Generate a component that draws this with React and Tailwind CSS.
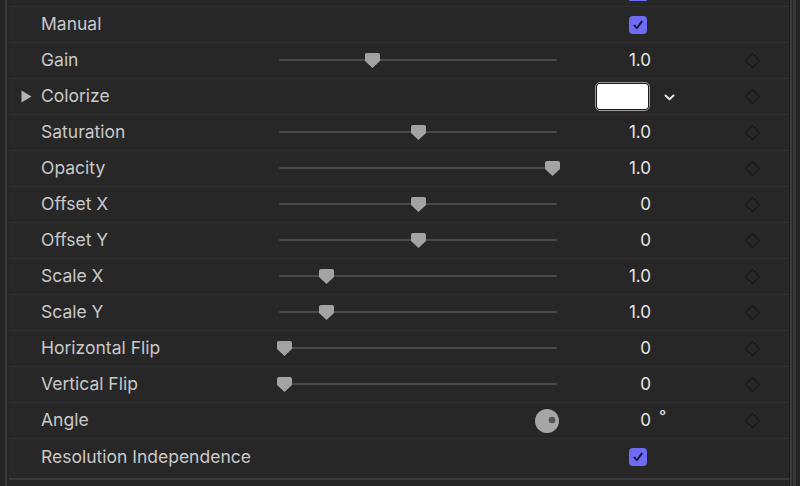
import React from 'react';

const rows = [
  { label: 'Manual', kind: 'check' },
  { label: 'Gain', kind: 'slider', pos: 0.33, value: '1.0' },
  { label: 'Colorize', kind: 'color', disclosure: true },
  { label: 'Saturation', kind: 'slider', pos: 0.5, value: '1.0' },
  { label: 'Opacity', kind: 'slider', pos: 1, value: '1.0' },
  { label: 'Offset X', kind: 'slider', pos: 0.5, value: '0' },
  { label: 'Offset Y', kind: 'slider', pos: 0.5, value: '0' },
  { label: 'Scale X', kind: 'slider', pos: 0.157, value: '1.0' },
  { label: 'Scale Y', kind: 'slider', pos: 0.157, value: '1.0' },
  { label: 'Horizontal Flip', kind: 'slider', pos: 0, value: '0' },
  { label: 'Vertical Flip', kind: 'slider', pos: 0, value: '0' },
  { label: 'Angle', kind: 'angle', value: '0' },
  { label: 'Resolution Independence', kind: 'check', last: true },
];

function Checkbox() {
  return (
    <div className="flex h-[18px] w-[18px] items-center justify-center rounded-[4px] bg-[#6d6cf3]">
      <svg width="12" height="12" viewBox="0 0 12 12" fill="none">
        <path d="M2.3 6.4 L4.9 9.2 L9.7 2.6" stroke="#16163a" strokeWidth="1.9" strokeLinecap="round" strokeLinejoin="round" />
      </svg>
    </div>
  );
}

function Slider({ pos }) {
  return (
    <div className="relative h-[16px] w-full">
      <div className="absolute left-[2px] right-[3px] top-[6px] h-[2px] rounded-full bg-[#4a4a4a]" />
      <svg
        className="absolute top-0"
        style={{ left: `${Math.round(pos * 268)}px` }}
        width="15"
        height="15"
        viewBox="0 0 15 15"
      >
        <path d="M2 0 H13 Q15 0 15 2 V8 L7.5 15 L0 8 V2 Q0 0 2 0 Z" fill="#a3a3a3" />
      </svg>
    </div>
  );
}

function Diamond() {
  return <div className="h-[11px] w-[11px] rotate-45 border border-[#161616]" />;
}

function Row({ row }) {
  return (
    <div
      className={
        'grid h-[36px] grid-cols-[268px_283px_91px_1fr] items-center ' +
        (row.last ? 'mb-[3px]' : 'border-b border-[#303030]')
      }
    >
      <div className="flex items-center pl-[12px] text-[17.5px] text-[#c9c9c9]">
        <div className="flex w-[20px] items-center">
          {row.disclosure && (
            <svg width="11" height="13" viewBox="0 0 11 13">
              <path d="M0.5 0.5 L10.5 6.5 L0.5 12.5 Z" fill="#b3b3b3" />
            </svg>
          )}
        </div>
        <span>{row.label}</span>
      </div>
      <div className="flex items-center justify-end">
        {row.kind === 'slider' && <Slider pos={row.pos} />}
        {row.kind === 'angle' && (
          <svg className="mr-[1px]" width="24" height="24" viewBox="0 0 24 24">
            <circle cx="12" cy="12" r="12" fill="#a6a6a6" />
            <circle cx="17" cy="11" r="3.3" fill="#555555" />
          </svg>
        )}
      </div>
      <div className="flex items-center justify-end text-[17px] text-[#e6e6e6]">
        {row.kind === 'check' && (
          <div className="pr-[4px]">
            <Checkbox />
          </div>
        )}
        {row.kind === 'color' && (
          <div className="mr-[1px] h-[29px] w-[55px] rounded-[5px] border border-[#9a9a9a] bg-[#1a1a1a] p-[1px]">
            <div className="h-full w-full rounded-[3px] bg-white" />
          </div>
        )}
        {(row.kind === 'slider' || row.kind === 'angle') && <span>{row.value}</span>}
      </div>
      <div className="flex items-center">
        <div className="flex w-[96px] items-center">
          {row.kind === 'color' && (
            <svg className="ml-[13px] mt-[2px]" width="11" height="7" viewBox="0 0 11 7">
              <path d="M1.5 1.5 L5.5 5.2 L9.5 1.5" stroke="#e8e8e8" strokeWidth="2" fill="none" strokeLinecap="round" strokeLinejoin="round" />
            </svg>
          )}
          {row.kind === 'angle' && (
            <span className="-mt-[9px] ml-[8px] text-[16px] leading-none text-[#e6e6e6]">°</span>
          )}
        </div>
        {row.kind !== 'check' && <Diamond />}
      </div>
    </div>
  );
}

export default function App() {
  return (
    <div className="flex h-[486px] w-[800px] overflow-hidden bg-[#232323] font-['Inter',sans-serif]">
      <div className="flex w-[9px] shrink-0">
        <div className="w-[5px] bg-[#242424]" />
        <div className="w-[2px] bg-[#393939]" />
        <div className="w-[2px] bg-[#252525]" />
      </div>
      <div className="flex w-[780px] shrink-0 flex-col bg-[#272727]">
        <div className="grid h-[7px] grid-cols-[268px_283px_91px_1fr] border-b border-[#303030]">
          <div />
          <div />
          <div className="flex justify-end pr-[4px]">
            <div className="h-[1px] w-[18px] rounded-b bg-[#6d6cf3]" />
          </div>
        </div>
        {rows.map((row) => (
          <Row key={row.label} row={row} />
        ))}
        <div className="h-[2px] bg-[#3a3a3a]" />
        <div className="flex-1 bg-[#262626]" />
      </div>
      <div className="flex flex-1">
        <div className="w-[1px] bg-[#1f1f1f]" />
        <div className="w-[2px] bg-[#3a3a3a]" />
        <div className="w-[1px] bg-[#2a2a2a]" />
        <div className="w-[3px] bg-[#363636]" />
        <div className="flex-1 bg-[#242424]" />
      </div>
    </div>
  );
}
